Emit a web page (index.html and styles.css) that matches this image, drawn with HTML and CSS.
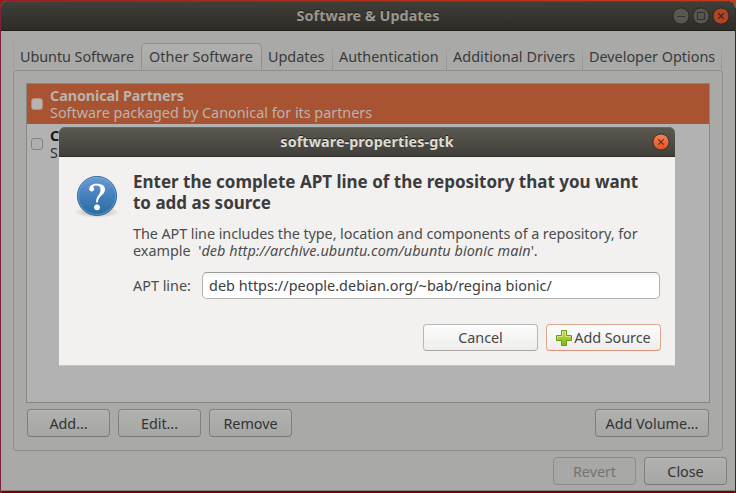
FILE: index.html
```html
<!DOCTYPE html>
<html lang="en">
<head>
<meta charset="utf-8">
<title>Software &amp; Updates</title>
<link rel="stylesheet" href="styles.css">
</head>
<body>
<div class="desktop">
  <div class="window">
    <header class="titlebar dimmed">
      <h1 class="title">Software &amp; Updates</h1>
      <div class="controls">
        <svg class="ctl" viewBox="0 0 18 18"><circle cx="9" cy="9" r="8.1" fill="#585750" stroke="#292824"/><path d="M5 9.5h8" stroke="#34332e" stroke-width="1.2"/></svg>
        <svg class="ctl" viewBox="0 0 18 18"><circle cx="9" cy="9" r="8.1" fill="#585750" stroke="#292824"/><rect x="5.5" y="5.5" width="7" height="7" fill="none" stroke="#34332e" stroke-width="1.1"/></svg>
        <svg class="ctl" viewBox="0 0 18 18"><circle cx="9" cy="9" r="8.1" fill="#b04424" stroke="#292824"/><path d="M6.3 6.3l5.4 5.4M11.7 6.3l-5.4 5.4" stroke="#40281d" stroke-width="1.3"/></svg>
      </div>
    </header>
    <main class="body">
      <nav class="tabs">
        <span class="tab t-ubuntu">Ubuntu Software</span>
        <span class="tab t-other active">Other Software</span>
        <span class="tab t-updates">Updates</span>
        <span class="tab t-auth">Authentication</span>
        <span class="tab t-drivers">Additional Drivers</span>
        <span class="tab t-dev">Developer Options</span>
      </nav>
      <section class="notebook">
        <div class="list">
          <div class="row selected">
            <span class="check"></span>
            <div class="source"><b>Canonical Partners</b><span>Software packaged by Canonical for its partners</span></div>
          </div>
          <div class="row">
            <span class="check"></span>
            <div class="source"><b>C</b><span>S</span></div>
          </div>
        </div>
        <div class="actions">
          <span class="btn dark">Add...</span>
          <span class="btn dark">Edit...</span>
          <span class="btn dark">Remove</span>
          <span class="btn dark wide">Add Volume...</span>
        </div>
      </section>
      <footer class="footer">
        <span class="btn dark disabled">Revert</span>
        <span class="btn dark">Close</span>
      </footer>
    </main>
  </div>

  <div class="dialog">
    <header class="titlebar">
      <h2 class="title">software-properties-gtk</h2>
      <div class="controls">
        <svg class="ctl" viewBox="0 0 18 18"><defs><linearGradient id="cl" x2="0" y2="1"><stop offset="0" stop-color="#f58058"/><stop offset="1" stop-color="#e4501f"/></linearGradient></defs><circle cx="9" cy="9" r="8.1" fill="url(#cl)" stroke="#34322d"/><path d="M6.3 6.3l5.4 5.4M11.7 6.3l-5.4 5.4" stroke="#5a2d1b" stroke-width="1.1"/></svg>
      </div>
    </header>
    <div class="content">
      <svg class="question" viewBox="0 0 46 44">
        <defs>
          <linearGradient id="q" x2="0" y2="1"><stop offset="0" stop-color="#6c9bd6"/><stop offset=".5" stop-color="#437fbb"/><stop offset="1" stop-color="#2a6c9e"/></linearGradient>
          <radialGradient id="s"><stop offset="0" stop-color="#000" stop-opacity=".3"/><stop offset="1" stop-color="#000" stop-opacity="0"/></radialGradient>
        </defs>
        <ellipse cx="23" cy="37" rx="23" ry="6" fill="url(#s)"/>
        <circle cx="23" cy="21" r="19.6" fill="url(#q)" stroke="#2c6799" stroke-width=".9"/>
        <circle cx="23" cy="21" r="18.5" fill="none" stroke="#8db5e2" stroke-opacity=".45"/>
        <path d="M15.200 13.800C15.500 10.400 18.700 8.800 23 8.800c4.900 0 8 2.100 8 5.700 0 5.500-6.900 6.200-7.200 13.100h-1.700c-.1-7.200 4.400-7.600 4.400-12.900 0-2.700-1.400-4.200-4-4.200-1.800 0-3.100.6-3.700 1.500 1 .4 1.500 1.200 1.400 2.200-.1 1.300-1.100 2.200-2.500 2.200-1.500 0-2.600-1.100-2.500-2.600z" fill="#fff"/>
        <circle cx="23" cy="32.300" r="2.900" fill="#fff"/>
      </svg>
      <div class="form">
        <h3 class="heading">Enter the complete APT line of the repository that you want<br>to add as source</h3>
        <p class="para"><span class="l1">The APT line includes the type, location and components of a repository, for</span><br>example &nbsp;'<i>deb http://archive.ubuntu.com/ubuntu bionic main</i>'.</p>
        <div class="field"><span class="label">APT line:</span><div class="entry">deb https://people.debian.org/~bab/regina bionic/</div></div>
        <div class="dialog-actions">
          <span class="btn">Cancel</span>
          <span class="btn suggested"><svg class="plus" viewBox="0 0 16 16"><defs><linearGradient id="p" x2="0" y2="1"><stop offset="0" stop-color="#c3dc52"/><stop offset="1" stop-color="#83b813"/></linearGradient></defs><path d="M5.500.5h5v5h5v5h-5v5h-5v-5h-5v-5h5z" fill="url(#p)" stroke="#6b991d"/><path d="M1.500 9V6.500h5v-5h3v5h5" fill="none" stroke="#e3f09b" stroke-opacity=".7"/></svg>Add Source</span>
        </div>
      </div>
    </div>
  </div>
</div>
</body>
</html>
```
FILE: styles.css
```css
* { box-sizing: border-box; }
body {
  margin: 0;
  font: 14.4px/17px "Noto Sans", "Open Sans", sans-serif;
  color: #3a3a3a;
  white-space: nowrap;
}
h1, h2, h3, p { margin: 0; }
.desktop {
  position: relative;
  width: 736px;
  height: 493px;
  padding: 1px 1px 2px;
  overflow: hidden;
  background: linear-gradient(90deg, #7d2338 0 2px, transparent 2px 733px, #850a06 733px) 0 8px no-repeat,
    linear-gradient(90deg, #941f22, #b2301b 50%, #c13c18) 0 0 / 100% 10px no-repeat, #750009;
}
.window {
  height: 490px;
  border-radius: 6px 6px 0 0;
  overflow: hidden;
  background: #a9a9a7;
  border-bottom: 1px solid #8b8080;
}

.titlebar {
  position: relative;
  display: flex;
  align-items: center;
  justify-content: center;
  height: 30px;
  border-radius: 6px 6px 0 0;
  background: linear-gradient(#5b594f, #403f3a);
  border-bottom: 1px solid #2c2b27;
  box-shadow: inset 0 1px #6a685e;
}
.titlebar.dimmed {
  background: linear-gradient(#403f39, #2d2c28);
  border-bottom-color: #22211e;
  box-shadow: inset 0 1px #4a4841;
}
.title {
  font-size: 14.4px;
  line-height: 20px;
  color: #dfdbd2;
  letter-spacing: .06px;
  text-shadow: 0 -1px #22211e;
}
.dimmed .title { color: #9b978f; letter-spacing: .02px; }
.controls {
  position: absolute;
  right: 5px;
  top: 6px;
  display: flex;
  gap: 2px;
}
.ctl { width: 18px; height: 18px; display: block; }

.body { padding: 12px 12px 0; }
.tabs { display: flex; height: 27px; }
.tab {
  height: 26px;
  padding: 5px 0 0 7px;
  border-right: 1px solid;
  border-image: linear-gradient(#a9a9a7, #929290) 1;
}
.t-ubuntu { width: 128px; border-right: 0; letter-spacing: -.06px; box-shadow: inset 1px 0 #a0a09e; }
.t-other { width: 121px; letter-spacing: .06px; }
.tab.active {
  border: 1px solid #8e8e8c;
  border-bottom: 0;
  border-image: none;
  border-radius: 5px 5px 0 0;
  padding-top: 4px;
  background: linear-gradient(#b0b0b0, #a9a9a7);
}
.t-updates { width: 71px; padding-left: 6px; }
.t-auth { width: 114px; padding-left: 6px; }
.t-drivers { width: 136px; padding-left: 6px; letter-spacing: .07px; }
.t-dev { width: 139px; padding-left: 6px; letter-spacing: -.01px; }

.notebook {
  width: 710px;
  height: 381px;
  padding: 12px 12px 0;
  border: 1px solid #8e8e8c;
  border-radius: 3px;
}
.list {
  height: 320px;
  border: 1px solid #868684;
  background: #b2b2b2;
}
.row {
  display: flex;
  align-items: center;
  height: 40px;
  padding-left: 4px;
  gap: 7px;
}
.check {
  width: 12px;
  height: 12px;
  border: 1px solid #858585;
  border-radius: 3px;
  background: #b0b0b0;
}
.source { display: flex; flex-direction: column; color: #323232; letter-spacing: -.02px; }
.source b { letter-spacing: -.1px; color: #161616; }
.selected { background: #a85331; }
.selected .source, .selected .source b { color: #b9b3ae; }
.selected .check { border-color: #c08772; background: #b4b4b4; }

.actions { display: flex; gap: 8px; padding: 6px 1px 0 1px; }
.btn {
  display: flex;
  align-items: center;
  justify-content: center;
  width: 115px;
  height: 27px;
  border: 1px solid #b9b7b4;
  border-bottom-color: #a9a7a4;
  border-radius: 4px;
  background: linear-gradient(#fdfdfd, #eeedec);
  color: #464646;
  letter-spacing: -.05px;
}
.btn.dark {
  width: 83px;
  height: 28px;
  border-color: #80807e;
  border-bottom-color: #777775;
  background: linear-gradient(#b1b1b1, #a6a6a4);
  box-shadow: inset 0 1px #b8b8b6;
  color: #333;
}
.btn.dark.wide { width: 114px; margin-left: auto; }
.btn.dark.disabled { border-color: #8b8b89; box-shadow: none; background: #a8a8a6; color: #757573; }
.footer { display: flex; justify-content: flex-end; gap: 8px; margin: 6px -4px 0 0; }

.dialog {
  position: absolute;
  left: 59px;
  top: 127px;
  width: 616px;
  height: 238px;
  border-radius: 6px 6px 0 0;
  background: #f2f1f0;
  box-shadow: 0 1px #c4c4c3;
}
.content { display: flex; padding: 14px 14px 0 15px; gap: 13px; }
.question { width: 46px; height: 44px; margin-top: 4px; flex: none; }
.form { flex: 1; min-width: 0; color: #4c4c4c; }
.heading { font-size: 17px; line-height: 21px; color: #3c3c3c; letter-spacing: -.005px; }
.para { margin-top: 12px; }
.l1 { letter-spacing: -.07px; }
.para i { letter-spacing: .08px; }
.field { display: flex; align-items: center; margin-top: 13px; }
.label { width: 69px; }
.entry {
  width: 458px;
  height: 27px;
  padding: 4px 6px;
  border: 1px solid #b3b1ae;
  border-top-color: #9b9996;
  border-radius: 5px;
  background: linear-gradient(#f5f5f5, #fff 6px);
  color: #3c3c3c;
  letter-spacing: .04px;
}
.dialog-actions { display: flex; justify-content: flex-end; gap: 8px; margin-top: 25px; }
.suggested { border-color: #e0a590; border-bottom-color: #dc9077; gap: 2px; }
.plus { width: 16px; height: 16px; }
```
